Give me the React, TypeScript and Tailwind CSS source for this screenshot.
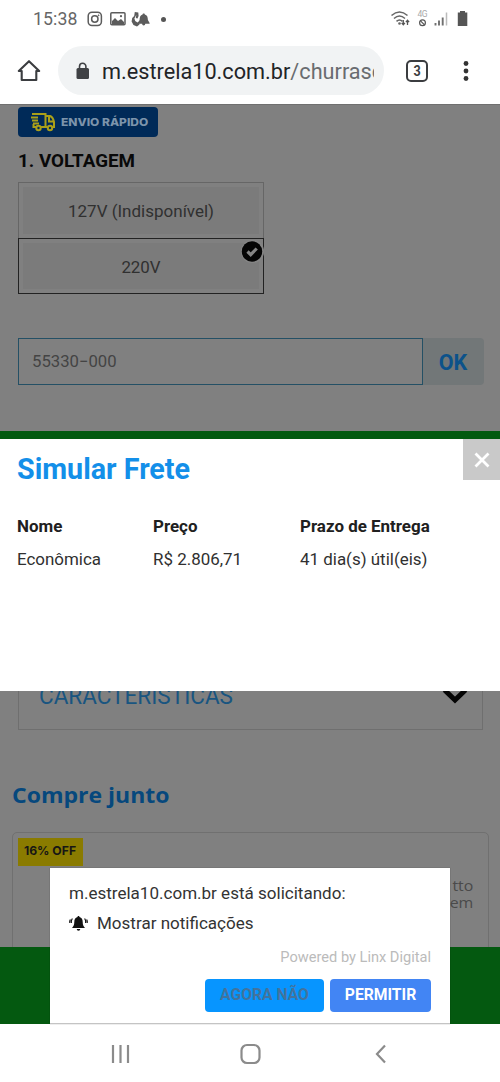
import React from 'react';

function StatusBar() {
  return (
    <div className="flex h-[38px] items-center pl-[33px] pr-[30px] text-[#666]">
      <span className="w-[46px] shrink-0 whitespace-nowrap text-[17.7px] leading-[38px] tracking-[0.1px]">15:38</span>
      <svg className="ml-[8px] h-[16px] w-[16px]" viewBox="0 0 16 16" fill="none" stroke="#5c5c5c" strokeWidth="1.5">
        <rect x="1.2" y="1.2" width="13.2" height="13.4" rx="3.8" />
        <circle cx="7.8" cy="8" r="3.2" />
        <circle cx="11.6" cy="4.3" r="0.5" fill="#5c5c5c" strokeWidth="0.8" />
      </svg>
      <svg className="ml-[7px] h-[14px] w-[16px]" viewBox="0 0 16 14">
        <rect x="0.8" y="0.8" width="14.2" height="12" rx="1" fill="#fff" stroke="#5c5c5c" strokeWidth="1.5" />
        <path d="M2 12V9l3-3 3 3 3-2 3 3v2z" fill="#5c5c5c" />
        <circle cx="11" cy="4.2" r="1.1" fill="#5c5c5c" />
      </svg>
      <svg className="ml-[5px] h-[16px] w-[20px]" viewBox="0 0 20 16" fill="#5c5c5c">
        <path d="M3.800 1L7.300 1.500 7.600 5 6.500 7.500 4.800 7 5.300 3.800 3.400 7.500 4.200 10 6.500 11.500 8 10.500 8.500 13.500 6 15.400 2.500 14 .6 10.500 1.200 7l2-2z" />
        <path d="M12.700 2.500c.7 0 1.100.4 1.100 1 2.400.6 3 2.600 3.100 5.400l1.700 3.100v.8h-4.300a1.600 1.600 0 0 1-3.200 0H7l-.1-.8 1.700-3.100c.1-2.800.7-4.800 3-5.400 0-.6.400-1 1.100-1z" />
      </svg>
      <span className="ml-[10px] h-[5px] w-[5px] rounded-full bg-[#555]" />
      <div className="flex-1" />
      <svg className="h-[20px] w-[80px]" viewBox="0 0 80 20" fill="none">
        <g stroke="#666" strokeWidth="1.6">
          <path d="M1.500 6.500Q9.500 -.5 17.500 6.500" />
          <path d="M4 9.500Q9.500 4.500 15 9.500" />
          <path d="M6.500 12.300Q9.500 9.700 12.500 12.300" />
        </g>
        <circle cx="9.500" cy="14.500" r="1.300" fill="#666" />
        <path d="M13.300 11v4M11.700 13.800l1.600 2 1.600-2M17.500 16v-4M15.900 13.200l1.600-2 1.600 2" stroke="#555" strokeWidth="1.300" />
        <text x="27.500" y="8.300" fontFamily="Roboto" fontSize="8.500" fill="#aaa" textLength="10">4G</text>
        <circle cx="32.500" cy="13.800" r="2.900" stroke="#555" strokeWidth="1.200" />
        <path d="M30.500 11.800l4 4" stroke="#555" strokeWidth="1.200" />
        <path d="M45.500 14v2.500M49 11.500v5M52.700 8.500v8" stroke="#707070" strokeWidth="1.900" />
        <path d="M56.500 3.500v13" stroke="#bbb" strokeWidth="1.500" />
        <path d="M70 2h5v1.600h2.300V17H67.800V3.600H70z" fill="#555" />
      </svg>
    </div>
  );
}

function BrowserBar() {
  return (
    <div className="flex h-[66px] items-start bg-white pt-[8px]">
      <svg className="ml-[17px] mt-[13px] h-[24px] w-[24px]" viewBox="0 0 24 24" fill="none" stroke="#3b3d40" strokeWidth="2.100">
        <path d="M1.800 12L12 2.200 22.200 12H19.300V21H4.700V12z" strokeLinejoin="round" />
      </svg>
      <div className="ml-[17px] flex h-[49px] w-[326px] items-center overflow-hidden rounded-full bg-[#f1f3f4] pl-[18px]">
        <svg className="h-[18px] w-[14px] shrink-0" viewBox="0 0 14 18">
          <rect x="0.500" y="6" width="12.500" height="11" rx="1.500" fill="#3f4144" />
          <path d="M3.500 7V4.500a3.200 3.200 0 0 1 6.400 0V7" fill="none" stroke="#3f4144" strokeWidth="1.600" />
        </svg>
        <div className="ml-[12px] w-[272px] overflow-hidden whitespace-nowrap pt-[2px] text-[21.700px] leading-[49px] text-[#222427]">
          m.estrela10.com.br<span className="text-[#696c70]">/churrasc</span>
        </div>
      </div>
      <div className="ml-[22px] mt-[14px] flex h-[22px] w-[22px] items-center justify-center rounded-[5px] border-2 border-[#3b3d40] text-[14px] font-bold text-[#3b3d40]">
        <span className="scale-x-[0.9]">3</span>
      </div>
      <svg className="ml-[34px] mt-[15px] h-[22px] w-[8px]" viewBox="0 0 8 22" fill="#333">
        <circle cx="4" cy="2.500" r="2.400" />
        <circle cx="4" cy="10" r="2.400" />
        <circle cx="4" cy="17.500" r="2.400" />
      </svg>
    </div>
  );
}

function ProductOptions() {
  return (
    <section className="h-[327px] overflow-hidden border-t border-[#707070] bg-[#808080] pl-[18px]">
      <div className="mt-[2px] flex h-[30px] w-[140px] items-center rounded-[4px] bg-[#002a58] pl-[12px]">
        <svg className="h-[20px] w-[26px] shrink-0" viewBox="0 0 26 20" fill="none" stroke="#aaa019" strokeWidth="2">
          <path d="M2 2H15.500V15H11M6 15H3.500v-3M1 5.500H8M2 8.500H8M3 11.500H9M15.500 4H20q3 1 4 6v5H22.500M17 15H12.500M19 4.500V9.500H24" />
          <circle cx="8.500" cy="16" r="2.200" />
          <circle cx="20" cy="16" r="2.200" />
        </svg>
        <span className="ml-[5px] mt-[2px] w-0 origin-left scale-x-[1.14] whitespace-nowrap font-[Inter] text-[10.500px] font-extrabold text-[#7d94ab]">ENVIO RÁPIDO</span>
      </div>
      <h2 className="mt-[12px] h-[24px] text-[18.800px] font-bold leading-[24px] text-[#090909]">1. VOLTAGEM</h2>
      <div className="mt-[9px] h-[56px] w-[246px] border border-b-0 border-[#666] p-[4px]">
        <div className="flex h-full items-center justify-center bg-[#7b7b7b] pt-[2px] text-[17px] text-[#303030]">127V (Indisponível)</div>
      </div>
      <div className="relative h-[56px] w-[246px] border border-[#222] p-[4px]">
        <div className="flex h-full items-center justify-center bg-[#7b7b7b] pt-[3px] text-[16.900px] text-[#303030]">220V</div>
        <svg className="absolute -right-[1px] top-0 h-[25px] w-[25px]" viewBox="0 0 25 25">
          <rect x="2" y="1" width="23" height="23" rx="11" fill="#858585" />
          <circle cx="13" cy="12.500" r="10.200" fill="#050505" />
          <path d="M8.500 12.500l3.200 3.200 6-6.200" fill="none" stroke="#858585" strokeWidth="3.200" />
        </svg>
      </div>
      <div className="mt-[44px] flex h-[47px] w-[466px]">
        <div className="w-[405px] border border-[#245065] pl-[13px] text-[16.700px] leading-[46px] text-[#444]">55330−000</div>
        <div className="w-[61px] rounded-r-[4px] bg-[#727778] pr-[1px] text-center text-[21.500px] font-bold leading-[49px] text-[#0c528a]">OK</div>
      </div>
    </section>
  );
}

function ShippingModal() {
  return (
    <section className="h-[252px] bg-white text-[16.950px] text-[#303030]">
      <div className="flex justify-between">
        <h1 className="pl-[17px] pt-[12px] text-[28.700px] font-bold leading-[36px] text-[#138fe9]">Simular Frete</h1>
        <div className="flex h-[41px] w-[37px] items-center justify-center bg-[#c9c9c9]">
          <svg className="h-[16px] w-[16px]" viewBox="0 0 16 16" stroke="#fff" strokeWidth="2.800">
            <path d="M1.500 1.500l13 13M14.500 1.500l-13 13" />
          </svg>
        </div>
      </div>
      <div className="mt-[23px] grid grid-cols-[136px_147px_1fr] pl-[17px] leading-[33px]">
        <b className="text-[#202020]">Nome</b>
        <b className="text-[#202020]">Preço</b>
        <b className="text-[#202020]">Prazo de Entrega</b>
        <span>Econômica</span>
        <span>R$ 2.806,71</span>
        <span>41 dia(s) útil(eis)</span>
      </div>
    </section>
  );
}

function RelatedProducts() {
  return (
    <section className="h-[256px] overflow-hidden bg-[#808080]">
      <div className="-mt-[30px] ml-[18px] flex h-[69px] w-[465px] justify-between border border-[#6f6f6f] pl-[20px] pr-[14px]">
        <span className="w-[194px] origin-left scale-x-[0.958] whitespace-nowrap text-[23.500px] leading-[69px] text-[#195580]">CARACTERÍSTICAS</span>
        <svg className="mt-[22px] h-[20px] w-[26px]" viewBox="0 0 26 20" fill="none" stroke="#050505" strokeWidth="5">
          <path d="M2.500 6L13 16 23.500 6" />
        </svg>
      </div>
      <h2 className="ml-[12px] mt-[49px] h-[32px] w-fit origin-left scale-x-[1.095] whitespace-nowrap font-['Open_Sans'] text-[21px] font-bold leading-[32px] text-[#06487d]">Compre junto</h2>
      <div className="ml-[12px] mt-[21px] flex h-[130px] w-[477px] items-start justify-between rounded-[5px] border border-[#707070] pl-[5px] pt-[5px]">
        <div className="flex h-[28px] w-[65px] items-center justify-center bg-[#8a7b00] font-[Inter] text-[12.200px] font-bold text-[#171615]">
          <span className="whitespace-nowrap pb-[2px] pr-[1px]">16% OFF</span>
        </div>
        <div className="mr-[15px] mt-[39px] origin-right scale-x-[1.06] text-right font-['Open_Sans'] text-[15px] leading-[17px] text-[#4a4a4a]">tto<br />em</div>
      </div>
    </section>
  );
}

function NotificationPrompt() {
  return (
    <div className="absolute left-[50px] top-[868px] h-[156px] w-[400px] border-b border-[#c4c4c4] bg-white pl-[19px] text-[17.050px] text-[#333] shadow-[0_0_1px_rgba(0,0,0,0.4)]">
      <div className="mt-[10px] h-[31px] leading-[30px]">m.estrela10.com.br está solicitando:</div>
      <div className="flex h-[30px] items-center">
        <svg className="h-[16px] w-[19px]" viewBox="0 0 19 16" fill="#111">
          <path d="M9.500 0c.7 0 1 .5 1 1.100 2.300.5 3.200 2.400 3.200 5 0 3 .8 4.500 2.300 6H3c1.500-1.500 2.300-3 2.300-6 0-2.600.9-4.500 3.200-5 0-.6.300-1.100 1-1.100zM7.700 13h3.600a1.800 1.800 0 0 1-3.600 0z" />
          <path d="M3.400 2.500Q1.900 4.500 2.400 7M1.400 3.500Q.5 5 .8 6.800M15.600 2.500q1.500 2 1 4.500M17.600 3.500q.9 1.500.6 3.300" fill="none" stroke="#111" strokeWidth="1.200" />
        </svg>
        <span className="ml-[9px]">Mostrar notificações</span>
      </div>
      <div className="mr-[19px] mt-[7px] h-[22px] text-right text-[14.600px] leading-[22px] text-[#bbb]">Powered by Linx Digital</div>
      <div className="mr-[19px] mt-[11px] flex justify-end gap-[6px] text-[15.700px] font-bold leading-[32px]">
        <div className="h-[33px] w-[119px] rounded-[4px] bg-[#0795ff] text-center text-[#43739c]">AGORA NÃO</div>
        <div className="h-[33px] w-[101px] rounded-[4px] bg-[#4285f4] text-center text-white">PERMITIR</div>
      </div>
    </div>
  );
}

export default function App() {
  return (
    <main className="relative h-[1082px] w-[500px] overflow-hidden bg-white font-[Roboto,sans-serif]">
      <StatusBar />
      <BrowserBar />
      <ProductOptions />
      <div className="h-[8px] bg-[#025a10]" />
      <ShippingModal />
      <RelatedProducts />
      <div className="h-[77px] bg-[#045910]" />
      <nav className="flex h-[58px] items-center bg-white">
        <svg className="h-[24px] w-[500px]" viewBox="0 0 500 24" fill="none" stroke="#8b8b8b" strokeWidth="2.200">
          <path d="M113 4V22M120.500 4V22M128 4V22" />
          <rect x="241.500" y="4" width="18" height="18" rx="5.500" />
          <path d="M385 4.500L377 13L385 21.500" />
        </svg>
      </nav>
      <NotificationPrompt />
    </main>
  );
}
